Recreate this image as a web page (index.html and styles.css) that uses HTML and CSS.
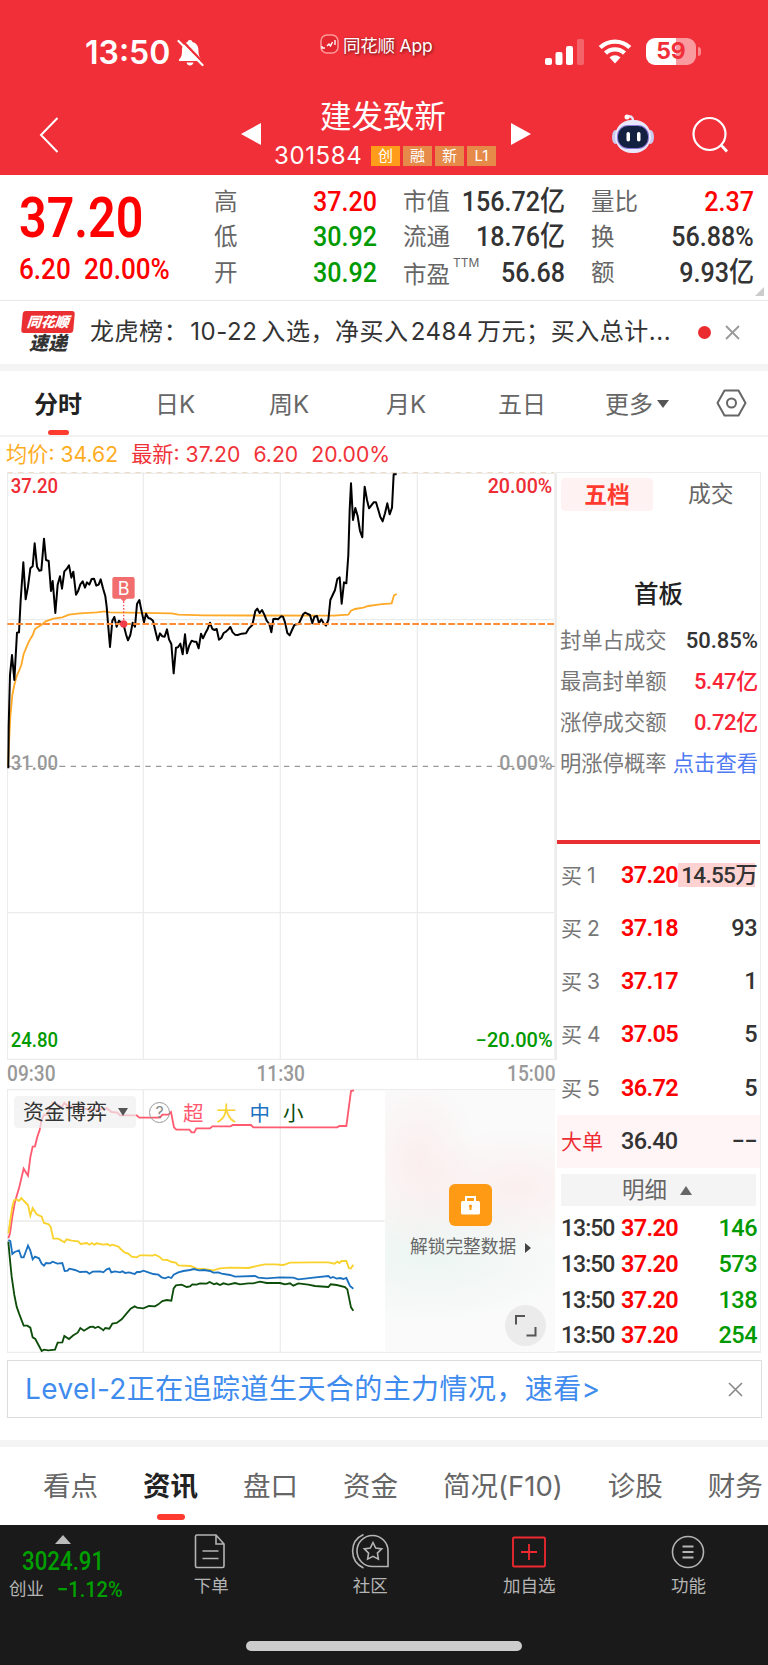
FILE: index.html
```html
<!DOCTYPE html>
<html lang="zh-CN">
<head>
  <meta charset="UTF-8" />
  <title>建发致新 301584</title>
  <link rel="stylesheet" href="styles.css">
</head>
<body>

  <header class="header">
    <div class="status">
      <span class="clock">13:50</span>
      <svg class="bell" width="27" height="28" viewBox="0 0 27 28">
        <path d="M13 1c1.6 0 2.2.8 2.4 2 4 1 6 4 6 8 0 5 1 7 3 9.500v1.500H2v-1.500C4.500 18 5 16 5 11c0-4 2-7 5.600-8 .2-1.200.8-2 2.400-2zM9.500 23.500h7c-.5 2-1.700 3-3.500 3s-3-1-3.500-3z" fill="#fff"/>
        <path d="M3.500 0l24 25" stroke="#f12f38" stroke-width="2.500"/>
        <path d="M1.500 2l24 24" stroke="#fff" stroke-width="2.200" stroke-linecap="round"/>
      </svg>
      <div class="app">
        <svg width="19" height="20" viewBox="0 0 19 20">
          <rect x="1" y="1" width="17" height="18" rx="6" fill="#e3262f" stroke="#f99" stroke-width="1.500"/>
          <path d="M2 12v2h3M7 12l2-2 1.500 2 2-4M15 6v5" stroke="#fff" stroke-width="1.400" fill="none"/>
        </svg>
        <span>同花顺 App</span>
      </div>
      <svg class="signal" width="40" height="26" viewBox="0 0 40 26">
        <rect x="0" y="19" width="7" height="7" rx="2" fill="#fff"/>
        <rect x="10.500" y="13" width="7" height="13" rx="2" fill="#fff"/>
        <rect x="21" y="7" width="7" height="19" rx="2" fill="#fff"/>
        <rect x="32" y="0" width="7" height="26" rx="2" fill="#fff" opacity=".25"/>
      </svg>
      <svg class="wifi" width="34" height="25" viewBox="0 0 34 25">
        <path d="M2.200 8.500a21.500 21.500 0 0 1 29.600 0M7.500 14.200a13.700 13.700 0 0 1 19 0" stroke="#fff" stroke-width="4.400" fill="none"/>
        <path d="M11.500 18.500a8 8 0 0 1 11 0L17 24.500z" fill="#fff"/>
      </svg>
      <div class="battery"><span>59</span></div>
      <i class="battery-tip"></i>
    </div>

    <div class="titlebar">
      <svg class="back" width="20" height="36" viewBox="0 0 20 36"><path d="M18.500 1L2 18l16.500 17" stroke="#fff" stroke-width="2" fill="none"/></svg>
      <svg class="prev" width="20" height="22"><path d="M20 0v22L0 11z" fill="#fff"/></svg>
      <div class="stock">
        <h1>建发致新</h1>
        <div class="code">
          <span class="code-no">301584</span>
          <b class="tag tag-hot">创</b><b class="tag">融</b><b class="tag">新</b><b class="tag">L1</b>
        </div>
      </div>
      <svg class="next" width="20" height="22"><path d="M0 0v22l20-11z" fill="#fff"/></svg>
      <svg class="robot" width="44" height="40" viewBox="0 0 44 40">
        <path d="M16 2.500c4-1 6 1 6 4" stroke="#e6e6fb" stroke-width="2.500" fill="none"/>
        <circle cx="16" cy="3" r="2.500" fill="#fff"/>
        <ellipse cx="4.500" cy="23" rx="3.500" ry="7" fill="#c9c9f0"/>
        <ellipse cx="39.500" cy="23" rx="3.500" ry="7" fill="#c9c9f0"/>
        <rect x="4" y="6" width="36" height="33" rx="16.500" fill="#e9e9fb"/>
        <rect x="6" y="11" width="32" height="24" rx="11" fill="#8d78d8"/>
        <rect x="7" y="12" width="30" height="22" rx="10" fill="#14203f"/>
        <rect x="15.500" y="18" width="3.500" height="9.500" rx="1.700" fill="#fff"/>
        <rect x="26" y="18" width="3.500" height="9.500" rx="1.700" fill="#fff"/>
      </svg>
      <svg class="search" width="37" height="38" viewBox="0 0 37 38">
        <circle cx="17.500" cy="18" r="16" stroke="#fff" stroke-width="2.200" fill="none"/>
        <path d="M29 29l6 6.500" stroke="#fff" stroke-width="2.800"/>
      </svg>
    </div>
  </header>

  <section class="quote">
    <div class="last">
      <div class="last-price"><span class="num">37.20</span></div>
      <div class="last-change"><span class="num">6.20</span><span class="num">20.00%</span></div>
    </div>
    <dl class="stats stats-a">
      <dt>高</dt><dd class="up"><span class="num">37.20</span></dd>
      <dt>低</dt><dd class="down"><span class="num">30.92</span></dd>
      <dt>开</dt><dd class="down"><span class="num">30.92</span></dd>
    </dl>
    <dl class="stats stats-b">
      <dt>市值</dt><dd><span class="num">156.72亿</span></dd>
      <dt>流通</dt><dd><span class="num">18.76亿</span></dd>
      <dt class="ttm">市盈<sup>TTM</sup></dt><dd><span class="num">56.68</span></dd>
    </dl>
    <dl class="stats stats-c">
      <dt>量比</dt><dd class="up"><span class="num">2.37</span></dd>
      <dt>换</dt><dd><span class="num">56.88%</span></dd>
      <dt>额</dt><dd><span class="num">9.93亿</span></dd>
    </dl>
    <i class="corner"></i>
  </section>

  <section class="news">
    <div class="news-logo"><b>同花顺</b><em>速递</em></div>
    <p>龙虎榜：<span>10-22</span>入选，净买入<span>2484</span>万元；买入总计...</p>
    <i class="dot"></i>
    <svg class="close" width="15" height="15" viewBox="0 0 15 15"><path d="M1 1l13 13M14 1L1 14" stroke="#999" stroke-width="1.800"/></svg>
  </section>

  <nav class="periods">
    <a class="active">分时</a>
    <a>日K</a>
    <a>周K</a>
    <a>月K</a>
    <a>五日</a>
    <a>更多<i class="caret"></i></a>
    <svg width="31" height="28" viewBox="0 0 31 28">
      <path d="M8.500 1.500h14L29.500 14l-7 12.500h-14L1.500 14z" stroke="#666" stroke-width="2" fill="none" stroke-linejoin="round"/>
      <circle cx="15.500" cy="14" r="4.500" stroke="#666" stroke-width="2" fill="none"/>
    </svg>
  </nav>

  <div class="legend">
    <span class="avg">均价: 34.62</span><span>最新: 37.20</span><span>6.20</span><span>20.00%</span>
  </div>

  <main class="board">
    <div class="charts">
      <!-- price chart, drawn at 3 units per pixel -->
      <svg class="price-chart" width="550" height="588" viewBox="21 36 1650 1764">
        <path d="M22 37V1798M430 37V1798M841 37V1798M1252 37V1798M22 479H1662M22 1358H1662M22 1798H1662M22 40H1662" stroke="#ececec" stroke-width="4" fill="none"/>
        <path d="M1667 37V1800" stroke="#ececec" stroke-width="8"/>
        <path d="M22 37H1662" stroke="#ecdcc6" stroke-width="4" stroke-dasharray="16 16"/>
        <path d="M180 919H1664" stroke="#999" stroke-width="4" stroke-dasharray="16 16"/>
        <path d="M22 919H180" stroke="#999" stroke-width="4" stroke-dasharray="16 16" stroke-dashoffset="4"/>
        <polyline fill="none" stroke="#ffa928" stroke-width="5.500" points="24,920 27,850 31,770 37,705 43,675 50,648 57,633 64,615 71,582 78,565 85,548 98,525 105,507 115,500 125,494 137,484 160,476 187,472 207,464 240,460 290,457 315,454 330,457 380,458 515,460 535,464 610,466 1000,467 1045,464 1053,452 1065,447 1090,443 1105,438 1140,433 1175,430 1182,406 1190,402"/>
        <polyline fill="none" stroke="#000" stroke-width="6" stroke-linejoin="round" points="25,925 26,800 30,645 36,585 43,660 51,518 57,517 62,420 70,307 77,418 84,380 91,325 98,319 104,250 111,320 118,332 124,331 132,236 138,300 146,303 153,393 158,363 166,459 173,374 180,349 186,386 193,334 200,327 207,316 214,353 220,335 228,404 234,394 241,373 248,364 255,383 261,367 268,374 275,357 282,356 289,377 296,374 302,358 309,385 316,409 320,440 324,490 330,561 337,482 343,471 350,500 357,482 364,489 371,495 378,523 384,541 391,525 398,488 405,500 411,432 418,420 425,455 432,487 438,461 445,474 452,476 459,482 466,512 473,541 480,520 487,529 494,530 501,508 507,538 514,552 521,640 528,563 534,562 541,551 548,583 555,523 561,580 568,556 575,542 582,545 589,545 596,565 603,521 609,535 616,520 623,507 630,488 637,507 644,510 650,507 657,539 664,534 671,519 678,515 685,508 691,501 698,517 705,524 713,525 725,521 738,520 746,506 757,495 766,453 772,446 779,459 786,450 793,464 800,482 808,492 814,517 820,477 827,476 834,478 843,469 849,470 855,487 862,519 869,526 876,510 883,495 890,493 896,492 903,477 910,462 916,458 923,462 930,465 937,490 943,470 951,468 957,490 964,478 971,490 978,497 985,480 991,420 998,405 1005,390 1012,357 1019,352 1025,431 1032,367 1039,370 1045,285 1049,150 1053,70 1059,180 1066,144 1073,168 1080,213 1087,232 1090,150 1094,80 1101,120 1107,145 1114,136 1121,127 1128,127 1135,150 1141,171 1148,184 1155,160 1162,130 1169,163 1176,143 1181,43 1190,43"/>
        <path d="M22 492H1662" stroke="#ff8c32" stroke-width="6" stroke-dasharray="20 7"/>
        <!-- buy marker -->
        <path d="M371 424V490" stroke="#f2555f" stroke-width="4" stroke-dasharray="5 5"/>
        <circle cx="371" cy="492" r="11" fill="#f23c4a"/>
        <path d="M343 351h55a6 6 0 0 1 6 6v53a6 6 0 0 1-6 6h-18l-9 9-9-9h-19a6 6 0 0 1-6-6v-53a6 6 0 0 1 6-6z" fill="#f26e6e"/>
        <text class="mark" x="371" y="404" text-anchor="middle">B</text>
        <text class="axis red" x="32" y="98" textLength="142" lengthAdjust="spacingAndGlyphs">37.20</text>
        <text class="axis red" x="1463" y="98" textLength="194" lengthAdjust="spacingAndGlyphs">20.00%</text>
        <text class="axis gray" x="32" y="929" textLength="142" lengthAdjust="spacingAndGlyphs">31.00</text>
        <text class="axis gray" x="1498" y="929" textLength="160" lengthAdjust="spacingAndGlyphs">0.00%</text>
        <text class="axis green" x="32" y="1761" textLength="142" lengthAdjust="spacingAndGlyphs">24.80</text>
        <text class="axis green" x="1427" y="1761" textLength="231" lengthAdjust="spacingAndGlyphs">−20.00%</text>
      </svg>

      <div class="times"><span class="num">09:30</span><span class="num">11:30</span><span class="num">15:00</span></div>

      <div class="funds">
        <svg class="funds-chart" width="550" height="264" viewBox="21 207 1650 792">
          <path d="M22 209V997M430 209V997M841 209V997M22 603H1154M21 209H1666M21 997H1670" stroke="#ececec" stroke-width="4" fill="none"/>
          <polyline fill="none" stroke="#ff5a70" stroke-width="5.500" points="25,655 30,640 37,590 44,550 50,528 57,505 64,475 71,446 84,467 91,412 98,380 105,379 112,350 119,330 125,298 132,284 140,285 150,265 160,248 172,253 185,262 193,249 203,258 240,262 270,270 300,268 320,265 335,276 352,278 360,286 410,286 418,293 480,293 487,284 505,284 513,276 522,322 529,329 568,329 575,337 583,337 589,325 630,325 637,319 692,319 698,315 753,315 760,322 1012,322 1018,318 1039,318 1053,213 1062,211"/>
          <polyline fill="none" stroke="#fad22e" stroke-width="5.500" points="25,640 31,600 37,560 42,541 50,538 57,543 64,534 72,543 84,555 91,587 98,564 110,583 125,590 132,609 145,612 152,621 160,656 175,656 193,667 200,658 215,662 235,664 242,672 260,669 268,674 275,669 283,674 290,670 310,674 322,672 330,677 337,674 355,680 365,690 375,698 385,701 395,710 410,712 420,706 440,706 458,707 465,704 478,710 487,719 502,720 515,726 527,728 535,736 572,738 590,746 610,747 640,751 660,745 690,743 745,744 775,737 795,733 825,733 850,735 870,728 940,727 985,727 1003,731 1012,725 1018,729 1025,723 1039,723 1047,745 1053,745 1060,734"/>
          <polyline fill="none" stroke="#1b72c0" stroke-width="5.500" points="25,660 31,663 37,702 44,696 57,691 64,712 71,712 78,693 84,677 91,692 98,718 105,710 117,715 125,731 132,737 138,729 150,730 158,725 172,731 187,729 194,753 203,752 208,746 225,750 240,756 260,755 268,761 278,755 300,754 310,757 320,748 328,745 334,757 345,754 360,757 368,754 375,759 388,757 397,760 404,762 411,756 420,756 430,752 445,757 460,762 475,764 485,772 495,775 505,771 514,774 521,764 535,757 550,753 570,750 582,747 597,751 612,750 630,753 640,758 655,757 665,761 690,765 705,770 765,768 775,773 800,775 840,772 880,773 895,778 915,776 940,773 985,768 992,774 999,771 1010,776 1020,774 1030,777 1039,774 1050,798 1060,806"/>
          <polyline fill="none" stroke="#0d4d0a" stroke-width="5.500" points="25,665 29,710 35,770 43,825 50,860 57,880 71,917 82,917 91,923 98,952 106,957 125,993 132,989 145,991 165,989 173,968 187,967 193,948 207,957 220,946 233,938 241,924 252,932 270,921 280,920 285,924 295,920 304,926 310,931 316,924 328,926 337,911 350,909 365,898 380,880 392,866 404,859 411,863 430,865 447,858 465,859 475,853 487,843 500,840 514,842 521,805 528,796 545,794 560,801 570,799 577,793 590,794 600,790 620,791 629,786 642,793 650,790 660,795 670,790 685,794 705,789 720,793 745,790 760,790 780,785 800,789 840,789 855,793 870,790 880,797 895,790 925,794 945,798 985,801 992,793 1010,795 1035,801 1042,808 1047,833 1053,862 1060,872"/>
        </svg>
        <div class="funds-head">
          <button type="button">资金博弈<i class="caret"></i></button>
          <span class="help">?</span>
          <span class="k k1">超</span><span class="k k2">大</span><span class="k k3">中</span><span class="k k4">小</span>
        </div>
        <div class="locked">
          <svg width="43" height="42" viewBox="0 0 43 42">
            <rect width="43" height="42" rx="6" fill="#ff9a14"/>
            <path d="M17 18v-5h9v5" stroke="#fff" stroke-width="2" fill="none"/>
            <rect x="12" y="17" width="19" height="13.500" rx="1.500" fill="#fff"/>
            <path d="M21.500 21.500v4.500" stroke="#ff9a14" stroke-width="2"/><circle cx="21.500" cy="22" r="1.600" fill="#ff9a14"/>
          </svg>
          <p>解锁完整数据<i></i></p>
        </div>
        <svg class="expand" width="41" height="41" viewBox="0 0 41 41">
          <circle cx="20.500" cy="20.500" r="20.500" fill="#ebebeb"/>
          <path d="M11 19.500v-8.500h9M30.500 22v8.500h-9" stroke="#555" stroke-width="2" fill="none"/>
        </svg>
      </div>
    </div>

    <aside class="depth">
      <div class="depth-tabs"><b>五档</b><span>成交</span></div>
      <h2>首板</h2>
      <ul class="limit">
        <li><span>封单占成交</span><b>50.85%</b></li>
        <li><span>最高封单额</span><b class="rose">5.47亿</b></li>
        <li><span>涨停成交额</span><b class="rose">0.72亿</b></li>
        <li><span>明涨停概率</span><a>点击查看</a></li>
      </ul>
      <ul class="bids">
        <li><span>买 1</span><b>37.20</b><em class="hit">14.55万</em></li>
        <li><span>买 2</span><b>37.18</b><em>93</em></li>
        <li><span>买 3</span><b>37.17</b><em>1</em></li>
        <li><span>买 4</span><b>37.05</b><em>5</em></li>
        <li><span>买 5</span><b>36.72</b><em>5</em></li>
        <li class="big"><span>大单</span><b>36.40</b><em>−−</em></li>
      </ul>
      <div class="detail-title">明细<i></i></div>
      <ul class="ticks">
        <li><span>13:50</span><b>37.20</b><em>146</em></li>
        <li><span>13:50</span><b>37.20</b><em>573</em></li>
        <li><span>13:50</span><b>37.20</b><em>138</em></li>
        <li><span>13:50</span><b>37.20</b><em>254</em></li>
      </ul>
    </aside>
  </main>

  <div class="banner">
    <p>Level-2正在追踪道生天合的主力情况，速看&gt;</p>
    <svg width="15" height="15" viewBox="0 0 15 15"><path d="M1 1l13 13M14 1L1 14" stroke="#888" stroke-width="1.600"/></svg>
  </div>

  <nav class="sections">
    <a>看点</a><a class="active">资讯</a><a>盘口</a><a>资金</a><a>简况(F10)</a><a>诊股</a><a>财务</a>
  </nav>

  <footer class="toolbar">
    <div class="index">
      <i></i>
      <span class="num index-value">3024.91</span>
      <div class="index-row"><span>创业</span><span class="num">−1.12%</span></div>
    </div>
    <a class="tool">
      <svg width="34" height="36" viewBox="0 0 34 36"><path d="M3 2h19l8 9v22a1.500 1.500 0 0 1-1.500 1.500H3A1.500 1.500 0 0 1 1.500 33V3.500A1.500 1.500 0 0 1 3 2zM22 2v9h8M8.500 18h16M8.500 25.500h16" stroke="#b4b4b4" stroke-width="1.600" fill="none"/></svg>
      <span>下单</span>
    </a>
    <a class="tool">
      <svg width="38" height="36" viewBox="0 0 38 36"><path d="M37 18v15.500H21.500A15.500 15.500 0 1 1 37 18zM12.500 1.500C-2 8-2 28 12.500 35" stroke="#b4b4b4" stroke-width="1.600" fill="none"/><path d="M22 9.500l2.700 5.500 6 .9-4.300 4.200 1 6-5.400-2.800-5.400 2.800 1-6-4.300-4.200 6-.9z" stroke="#b4b4b4" stroke-width="1.600" fill="none"/></svg>
      <span>社区</span>
    </a>
    <a class="tool">
      <svg width="34" height="36" viewBox="0 0 34 36"><rect x="1" y="4.500" width="32" height="29" rx="1" stroke="#f0282f" stroke-width="1.800" fill="none"/><path d="M17 11v16M9 19h16" stroke="#f0282f" stroke-width="1.800"/></svg>
      <span>加自选</span>
    </a>
    <a class="tool">
      <svg width="34" height="36" viewBox="0 0 34 36"><circle cx="17" cy="19" r="15.500" stroke="#b4b4b4" stroke-width="1.600" fill="none"/><path d="M11.500 13.500h11M11.500 19h11M11.500 24.500h11" stroke="#b4b4b4" stroke-width="1.800"/></svg>
      <span>功能</span>
    </a>
    <div class="home"></div>
  </footer>

</body>
</html>
```

FILE: styles.css
```css
* {
  box-sizing: border-box;
}

body {
  margin: 0;
  width: 768px;
  background: #fff;
  color: #333;
  font-family: Inter, "Noto Sans CJK SC", sans-serif;
  font-size: 24px;
  overflow-x: hidden;
}

h1, h2, p, ul, dl, dd {
  margin: 0;
  padding: 0;
}

ul { list-style: none; }
i, em { font-style: normal; }
svg { display: block; flex-shrink: 0; }

.num {
  display: inline-block;
  font-family: Roboto, "Noto Sans CJK SC", sans-serif;
  font-weight: 500;
  white-space: nowrap;
  transform: scaleX(.89);
  transform-origin: 100% 50%;
}

.up { color: #f00; }
.down { color: #009a00; }

/* header */
.header {
  height: 174.500px;
  background: #f12f38;
  color: #fff;
}

.status {
  display: flex;
  height: 104px;
  padding-left: 85px;
}

.clock {
  width: 92px;
  margin-top: 34px;
  font-size: 32px;
  font-weight: 600;
  line-height: 38px;
}

.bell { margin-top: 39px; }

.app {
  display: flex;
  gap: 4px;
  width: 160px;
  margin: 34px 0 0 116px;
  font-size: 17.500px;
  line-height: 23px;
  letter-spacing: -.2px;
  white-space: nowrap;
  text-shadow: 1px 1px 3px rgba(0, 0, 0, .6);
}

.signal { margin: 39px 0 0 65px; }
.wifi { margin: 39px 0 0 13px; }

.battery {
  width: 50px;
  height: 27px;
  margin: 38px 0 0 14px;
  border-radius: 9px;
  background: linear-gradient(90deg, #fff 59%, #f99a9e 59%);
  color: #f12f38;
  font-size: 23px;
  font-weight: 700;
  line-height: 27px;
  text-align: center;
}

.battery-tip {
  width: 3px;
  height: 9px;
  margin: 47px 0 0 2px;
  border-radius: 0 4px 4px 0;
  background: #f88a8f;
}

.titlebar {
  display: flex;
  height: 70px;
  padding-left: 39px;
}

.back { margin-top: 13px; }
.prev { margin: 19px 0 0 182px; }
.next { margin: 19px 0 0 14px; }
.robot { margin: 10px 0 0 80px; }
.search { margin: 12px 0 0 37px; }

.stock {
  width: 223px;
  margin: -7px 0 0 13px;
}

.stock h1 {
  margin-left: 46px;
  font-size: 31.500px;
  font-weight: 400;
  line-height: 40px;
  white-space: nowrap;
}

.code {
  display: flex;
  margin-top: 9px;
}

.code-no {
  flex: none;
  width: 97px;
  font-size: 24px;
  letter-spacing: .6px;
  line-height: 20px;
}

.tag {
  flex: none;
  width: 29px;
  height: 20px;
  margin-right: 3px;
  background: #e58a48;
  font-size: 15px;
  font-weight: 400;
  line-height: 20px;
  text-align: center;
}

.tag-hot { background: #ff9c1a; }

/* quote */
.quote {
  position: relative;
  display: flex;
  height: 126px;
  border-bottom: 1px solid #e8e8e8;
  padding: 9px 0 0 19px;
}

.last {
  width: 195px;
  color: #f00;
}

.last .num { transform-origin: 0 50%; }

.last-price {
  font-size: 55px;
  line-height: 67px;
}

.last-price .num {
  font-weight: 600;
  transform: scaleX(.88);
}

.last-change {
  display: flex;
  font-size: 29px;
  line-height: 35px;
}

.last-change .num { transform: scaleX(.9); }
.last-change .num:first-child { width: 65px; }

.stats {
  display: grid;
  grid-template-columns: auto minmax(0, 1fr);
  grid-auto-rows: 35.500px;
  line-height: 35.500px;
}

.stats-a { width: 163px; }
.stats-b { width: 162px; margin-left: 26px; }
.stats-c { width: 163px; margin-left: 26px; }

.stats dt {
  color: #666;
  font-size: 23.500px;
  white-space: nowrap;
}

.stats dd {
  font-size: 28.200px;
  text-align: right;
  direction: rtl;
}

.stats .num { direction: ltr; }

.stats .ttm {
  padding-top: 2px;
  width: 60px;
}

.ttm sup {
  margin-left: 3px;
  font-size: 12px;
  line-height: 0;
  vertical-align: 16px;
}

.corner {
  position: absolute;
  right: 4px;
  bottom: 4px;
  border-left: 9px solid transparent;
  border-bottom: 9px solid #ccc;
}

/* news */
.news {
  display: flex;
  align-items: center;
  height: 63.500px;
  padding-left: 22px;
}

.news-logo {
  width: 52px;
  margin-right: 16px;
}

.news-logo b {
  display: block;
  height: 22px;
  border-radius: 3px;
  background: #ea2f33;
  color: #fff;
  font-size: 14px;
  font-weight: 900;
  font-style: italic;
  line-height: 22px;
  text-align: center;
  transform: skewX(-5deg);
}

.news-logo em {
  display: block;
  margin-top: 1px;
  font-size: 19px;
  font-weight: 900;
  font-style: italic;
  line-height: 20px;
  text-align: center;
}

.news p {
  width: 590px;
  letter-spacing: .55px;
  line-height: 34px;
  white-space: nowrap;
}

.news p span { margin: 0 4px 0 2px; }

.dot {
  width: 13px;
  height: 13px;
  margin-left: 18px;
  border-radius: 50%;
  background: #ea2c2f;
}

.close { margin-left: 14px; }

/* period tabs */
.periods {
  display: grid;
  grid-template-columns: 121px 114px 117px 112px 107px 111px 31px;
  align-items: center;
  height: 73px;
  padding-left: 34px;
  border-top: 7px solid #f4f4f4;
  border-bottom: 2px solid #f2f2f2;
  color: #666;
}

.periods a {
  position: relative;
  margin-top: -2px;
  white-space: nowrap;
}

.active {
  color: #222;
  font-weight: 600;
}

.active::after {
  content: "";
  position: absolute;
  border-radius: 3px;
  background: #ff3b30;
}

.periods .active::after {
  left: 14px;
  bottom: -15px;
  width: 21px;
  height: 5px;
}

.caret {
  display: inline-block;
  margin-left: 4px;
  border: 6px solid transparent;
  border-top: 8px solid #555;
  border-bottom: 0;
  vertical-align: 5px;
}

.legend {
  display: flex;
  gap: 13px;
  height: 35px;
  padding-left: 6px;
  color: #f03238;
  font-size: 21.200px;
  line-height: 35px;
  white-space: nowrap;
}

.legend .avg { color: #ffad1f; }

/* charts */
.board {
  display: flex;
  height: 881px;
  padding-left: 7px;
}

.charts { width: 550px; }

.axis {
  font-family: Roboto, sans-serif;
  font-size: 58px;
  font-weight: 500;
}

.red { fill: #ee2c34; }
.gray { fill: #999; }
.green { fill: #009a00; }

.mark {
  fill: #fff;
  font-size: 54px;
}

.times {
  display: flex;
  justify-content: space-between;
  width: 549px;
  height: 29px;
  color: #999;
  font-size: 21.500px;
  line-height: 28px;
}

.times .num:first-child { transform-origin: 0 50%; }
.times .num:nth-child(2) { transform-origin: 40% 50%; }

.funds { position: relative; }

.funds-head {
  position: absolute;
  top: 7px;
  left: 7px;
  display: flex;
  align-items: center;
  height: 32px;
  font-size: 20.500px;
}

.funds-head button {
  width: 122px;
  height: 32px;
  padding: 0 0 0 9px;
  border: 0;
  border-radius: 4px;
  background: rgba(240, 240, 240, .7);
  color: #333;
  font: inherit;
  font-size: 21px;
  line-height: 32px;
  text-align: left;
  white-space: nowrap;
}

.funds-head .caret {
  margin-left: 11px;
  border-width: 8px 5px 0;
  vertical-align: 3px;
}

.help {
  width: 21px;
  height: 21px;
  margin: 0 13px 0 13px;
  border: 1.500px solid #999;
  border-radius: 50%;
  color: #888;
  font-size: 16px;
  line-height: 18px;
  text-align: center;
}

.k { width: 33.300px; }
.k1 { color: #ff5a70; }
.k2 { color: #fad22e; }
.k3 { color: #1b72c0; }
.k4 { color: #0d4d0a; }

.locked {
  position: absolute;
  top: 1px;
  left: 378px;
  width: 170px;
  height: 262px;
  padding: 94px 0 0 25px;
  background:
    radial-gradient(ellipse 60px 90px at 34px 75px, rgba(255, 210, 210, .3), rgba(255, 210, 210, 0)),
    radial-gradient(ellipse 100px 60px at 130px 98px, rgba(255, 210, 210, .28), rgba(255, 210, 210, 0)),
    radial-gradient(ellipse 150px 70px at 45px 165px, rgba(205, 235, 225, .3), rgba(205, 235, 225, 0)),
    #fafafa;
}

.locked svg { margin-left: 39px; }

.locked p {
  margin-top: 8px;
  color: #666;
  font-size: 17.700px;
  line-height: 26px;
  white-space: nowrap;
}

.locked i {
  display: inline-block;
  margin-left: 9px;
  border: 5px solid transparent;
  border-left: 6px solid #444;
  border-right: 0;
}

.expand {
  position: absolute;
  top: 216px;
  left: 498px;
}

/* depth panel */
.depth {
  width: 204px;
  border: solid #ececec;
  border-width: 1px 1px 2px 0;
}

.depth-tabs {
  display: flex;
  align-items: center;
  height: 33px;
  margin: 5px 0 0 4px;
  color: #666;
  font-size: 22.800px;
  line-height: 30px;
}

.depth-tabs b {
  width: 92px;
  height: 33px;
  margin-right: 35px;
  border-radius: 4px;
  background: #fff2f2;
  color: #ff3b30;
  font-weight: 600;
  line-height: 33px;
  text-align: center;
}

.depth-tabs span { margin-top: -2px; }

.depth h2 {
  margin-top: 66px;
  font-size: 24.500px;
  font-weight: 500;
  line-height: 34px;
  text-align: center;
  color: #222;
}

.limit {
  height: 233px;
  padding: 9px 2px 0 3px;
  border-bottom: 4px solid #ea2f33;
}

.limit li {
  display: flex;
  justify-content: space-between;
  height: 41px;
  font-size: 21.300px;
  line-height: 41px;
  white-space: nowrap;
}

.limit span { color: #777; }

.limit b {
  font-family: Roboto, "Noto Sans CJK SC", sans-serif;
  font-size: 22px;
  font-weight: 500;
}

.limit .rose {
  color: #fb2437;
  letter-spacing: -.3px;
}

.limit a { color: #4f7bf2; }

.bids li, .ticks li {
  display: flex;
  height: 53.300px;
  padding: 0 3px 0 4px;
  line-height: 53.300px;
}

.bids { padding-top: 4.500px; }

.bids span, .ticks span {
  width: 60px;
  color: #777;
  font-size: 21px;
  word-spacing: -1px;
}

/* price stays above the volume highlight */
.bids b, .ticks b {
  position: relative;
  z-index: 1;
  width: 57px;
  color: #f00;
}

.bids b, .bids em, .ticks b, .ticks em, .ticks span {
  font-family: Roboto, "Noto Sans CJK SC", sans-serif;
  font-size: 23.500px;
  font-weight: 500;
  letter-spacing: -.5px;
}

.bids b, .ticks b {
  font-weight: 600;
  letter-spacing: -.7px;
}

.bids em, .ticks em {
  flex: 1;
  text-align: right;
  white-space: nowrap;
}

.bids .hit {
  background: linear-gradient(#ffd2d2, #ffd2d2) 0 50% / 77px 24px no-repeat;
  font-size: 22.500px;
  letter-spacing: -.7px;
}

.bids .big { background: #fff5f6; }
.bids .big span { color: #ee2c34; }
.bids .big b { color: #333; font-weight: 500; }

.detail-title {
  height: 32px;
  margin: 6px 4px 5px;
  padding-left: 61px;
  background: #f4f4f4;
  color: #666;
  font-size: 22.500px;
  line-height: 32px;
}

.detail-title i {
  display: inline-block;
  margin-left: 13px;
  border: 6px solid transparent;
  border-bottom: 9px solid #666;
  border-top: 0;
  vertical-align: 3px;
}

.ticks li {
  height: 35.700px;
  line-height: 35.700px;
}

.ticks span {
  color: #333;
  font-size: 23px;
  letter-spacing: -1px;
}

.ticks em { color: #009a00; }

/* banner */
.banner {
  display: flex;
  align-items: center;
  justify-content: space-between;
  width: 755px;
  height: 58px;
  margin: 7px 0 22px 7px;
  padding: 0 18px 0 17px;
  border: 1px solid #ddd;
  color: #3f8cee;
  font-size: 28px;
  letter-spacing: .42px;
  line-height: 54px;
  white-space: nowrap;
}

/* section tabs */
.sections {
  display: flex;
  gap: 45px;
  height: 85px;
  padding-left: 43px;
  border-top: 7px solid #f4f4f4;
  color: #666;
  font-size: 27.500px;
  line-height: 79px;
  white-space: nowrap;
  overflow: hidden;
}

.sections a { position: relative; }

.sections .active::after {
  left: 14px;
  top: 67px;
  width: 28px;
  height: 6px;
}

/* bottom toolbar */
.toolbar {
  position: relative;
  display: flex;
  height: 140px;
  background: #1a1a1a;
  color: #b4b4b4;
  font-size: 17.500px;
}

.index {
  width: 132px;
  padding-top: 10px;
  text-align: center;
}

.index > i {
  display: block;
  width: 16px;
  margin-left: 55px;
  border: 8px solid transparent;
  border-bottom: 9px solid #bbb;
  border-top: 0;
}

.index .num {
  color: #00a000;
  transform-origin: 0 50%;
}

.index .index-value {
  margin-right: 6px;
  font-size: 25px;
  line-height: 35px;
  transform-origin: 50% 50%;
}

.index-row {
  display: flex;
  padding-left: 9px;
  line-height: 20px;
}

.index-row .num {
  margin-left: 13px;
  font-size: 22.500px;
}

.tool {
  display: flex;
  flex-direction: column;
  align-items: center;
  width: 159.500px;
  padding-top: 8px;
}

.tool span { line-height: 34px; }

.home {
  position: absolute;
  left: 246px;
  bottom: 14px;
  width: 276px;
  height: 10px;
  border-radius: 5px;
  background: #ccc;
}
```
